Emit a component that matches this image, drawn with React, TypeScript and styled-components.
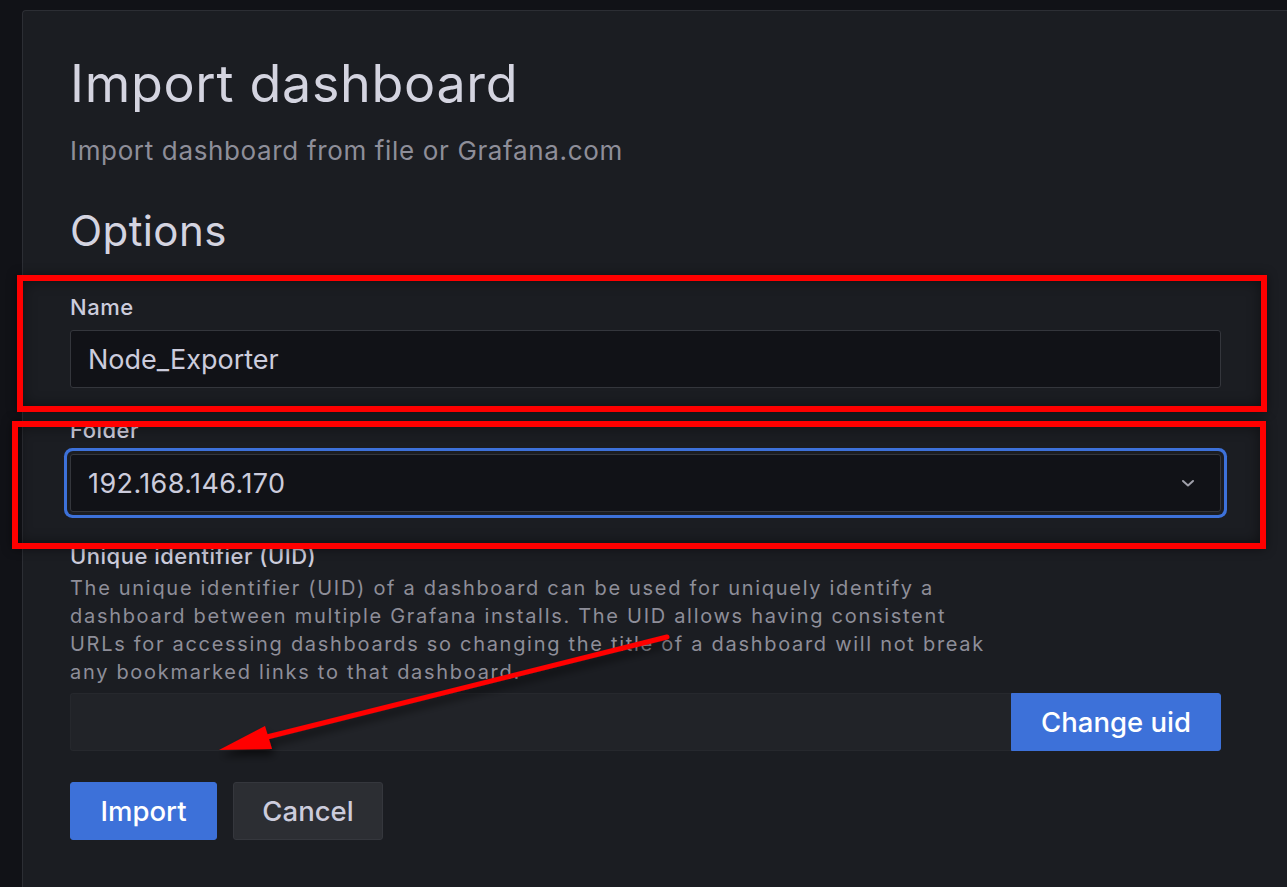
import React from "react";
import styled, { createGlobalStyle } from "styled-components";

const GlobalStyle = createGlobalStyle`
  html, body {
    margin: 0;
    padding: 0;
    background: #111217;
    overflow: hidden;
  }
  body {
    font-family: Inter, "Noto Sans", "Liberation Sans", sans-serif;
    color: #ccccdc;
  }
  * { box-sizing: border-box; }
`;

const Page = styled.div`
  position: relative;
  width: 1287px;
  height: 887px;
  padding: 10px 0 0 22px;
  overflow: hidden;
`;

const Panel = styled.main`
  background: #1b1d22;
  border: 1px solid #2c2e34;
  border-right: none;
  border-bottom: none;
  border-radius: 4px 0 0 0;
  height: 900px;
  padding: 42px 0 0 47px;
  width: 1300px;
`;

const Content = styled.div`
  width: 1151px;
  display: flex;
  flex-direction: column;
`;

const Title = styled.h1`
  margin: 0;
  font-size: 52px;
  font-weight: 400;
  line-height: 62px;
  color: #d4d4e0;
  letter-spacing: 0.7px;
`;

const Subtitle = styled.p`
  margin: 20px 0 0;
  font-size: 26px;
  line-height: 32px;
  letter-spacing: 0.65px;
  color: #8e8e99;
`;

const SectionTitle = styled.h2`
  margin: 39px 0 0;
  font-size: 42px;
  font-weight: 400;
  line-height: 50px;
  letter-spacing: 0.4px;
  color: #d4d4e0;
`;

const Field = styled.div<{ $gap?: number }>`
  display: flex;
  flex-direction: column;
  margin-top: ${(p) => p.$gap ?? 0}px;
`;

const Label = styled.label`
  font-size: 22px;
  font-weight: 500;
  line-height: 26px;
  letter-spacing: 0.5px;
  color: #ccccdc;
`;

const Description = styled.div`
  font-size: 20px;
  line-height: 28px;
  letter-spacing: 1.7px;
  color: #8e8e99;
  margin-top: 5px;
  white-space: nowrap;
`;

const InputBox = styled.div<{ $focused?: boolean }>`
  position: relative;
  margin-top: ${(p) => (p.$focused ? 11 : 10)}px;
  height: 58px;
  background: #111217;
  border: 1px solid #34363c;
  border-radius: 3px;
  display: flex;
  align-items: center;
  padding: 0 17px;
  font-size: 27px;
  letter-spacing: ${(p) => (p.$focused ? 0.4 : 0)}px;
  color: #ccccdc;
  box-shadow: ${(p) =>
    p.$focused ? "0 0 0 3px #1b1d22, 0 0 0 6px #3d71d9" : "none"};
`;

const InputText = styled.span`
  flex: 1;
`;

const Chevron = styled.svg`
  width: 14px;
  height: 14px;
  margin-right: 8px;
  color: #a0a0aa;
`;

const UidRow = styled.div`
  display: flex;
  margin-top: 7px;
  height: 58px;
`;

const UidInput = styled.div`
  flex: 1;
  background: #212328;
  border: 1px solid #26282d;
  border-right: none;
  border-radius: 3px 0 0 3px;
`;

const Button = styled.button<{ $variant?: "primary" | "secondary"; $width: number; $attached?: boolean }>`
  height: 58px;
  width: ${(p) => p.$width}px;
  font-family: inherit;
  font-size: 27.5px;
  font-weight: 500;
  border-radius: ${(p) => (p.$attached ? "0 3px 3px 0" : "3px")};
  cursor: pointer;
  padding: 0;
  background: ${(p) => (p.$variant === "secondary" ? "#2c2e33" : "#3d71d9")};
  border: 1px solid ${(p) => (p.$variant === "secondary" ? "#35373d" : "#3d71d9")};
  color: ${(p) => (p.$variant === "secondary" ? "#ccccdc" : "#ffffff")};
`;

const ButtonRow = styled.div`
  display: flex;
  gap: 16px;
  margin-top: 31px;
`;

const RedBox = styled.div<{ $x: number; $y: number; $w: number; $h: number }>`
  position: absolute;
  left: ${(p) => p.$x}px;
  top: ${(p) => p.$y}px;
  width: ${(p) => p.$w}px;
  height: ${(p) => p.$h}px;
  border: 6px solid #ff0000;
  box-shadow: 0 0 10px rgba(0, 0, 0, 0.45), inset 0 0 14px rgba(0, 0, 0, 0.45);
  pointer-events: none;
`;

const ArrowLayer = styled.svg`
  position: absolute;
  left: 0;
  top: 0;
  width: 1287px;
  height: 887px;
  pointer-events: none;
`;

export default function App() {
  return (
    <>
      <GlobalStyle />
      <Page>
        <Panel>
          <Content>
            <Title>Import dashboard</Title>
            <Subtitle>Import dashboard from file or Grafana.com</Subtitle>
            <SectionTitle>Options</SectionTitle>

            <Field $gap={38}>
              <Label>Name</Label>
              <InputBox>
                <InputText>Node_Exporter</InputText>
              </InputBox>
            </Field>

            <Field $gap={29}>
              <Label>Folder</Label>
              <InputBox $focused>
                <InputText>192.168.146.170</InputText>
                <Chevron viewBox="0 0 14 14" fill="none" stroke="currentColor" strokeWidth="2" strokeLinecap="round" strokeLinejoin="round">
                  <path d="M2 5 L7 9.5 L12 5" />
                </Chevron>
              </InputBox>
            </Field>

            <Field $gap={31}>
              <Label>Unique identifier (UID)</Label>
              <Description>
                The unique identifier (UID) of a dashboard can be used for uniquely identify a<br />
                dashboard between multiple Grafana installs. The UID allows having consistent<br />
                URLs for accessing dashboards so changing the title of a dashboard will not break<br />
                any bookmarked links to that dashboard.
              </Description>
              <UidRow>
                <UidInput />
                <Button $width={210} $attached>Change uid</Button>
              </UidRow>
            </Field>

            <ButtonRow>
              <Button $width={147}>Import</Button>
              <Button $variant="secondary" $width={150}>Cancel</Button>
            </ButtonRow>
          </Content>
        </Panel>

        <RedBox $x={17} $y={275} $w={1250} $h={137} />
        <RedBox $x={12} $y={421} $w={1254} $h={128} />

        <ArrowLayer viewBox="0 0 1287 887">
          <defs>
            <filter id="arrowShadow" x="-10%" y="-30%" width="120%" height="160%">
              <feGaussianBlur in="SourceAlpha" stdDeviation="4" />
              <feOffset dx="2" dy="6" result="blur" />
              <feComponentTransfer>
                <feFuncA type="linear" slope="0.6" />
              </feComponentTransfer>
              <feMerge>
                <feMergeNode />
                <feMergeNode in="SourceGraphic" />
              </feMerge>
            </filter>
          </defs>
          <g filter="url(#arrowShadow)">
            <line x1="667" y1="637" x2="255" y2="740" stroke="#ff0000" strokeWidth="5" strokeLinecap="round" />
            <polygon points="219,750 265,726 272,749" fill="#ff0000" />
          </g>
        </ArrowLayer>
      </Page>
    </>
  );
}
